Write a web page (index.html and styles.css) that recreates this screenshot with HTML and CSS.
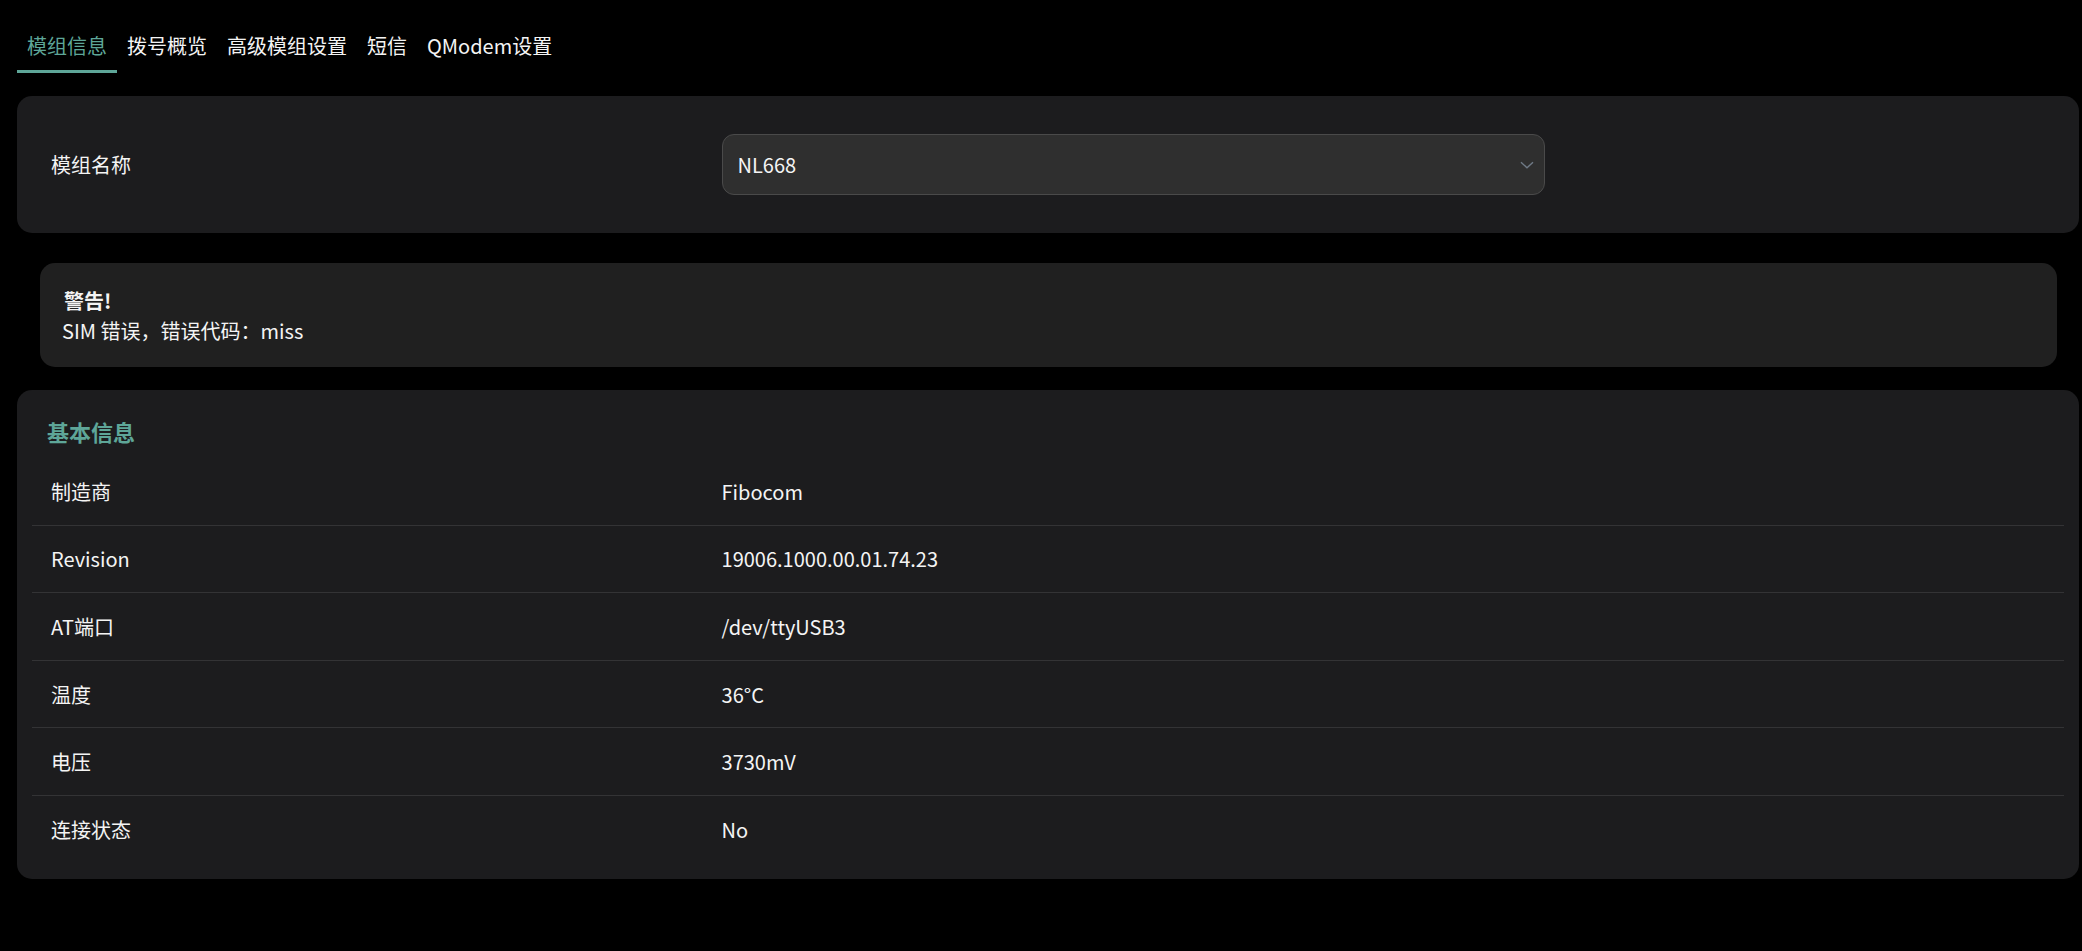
FILE: index.html
```html
<!DOCTYPE html>
<html lang="zh-CN">
<head>
<meta charset="utf-8">
<title>模组信息</title>
<link rel="stylesheet" href="styles.css">
</head>
<body>
<div class="app">
  <nav class="tabs">
    <a class="tab active">模组信息</a>
    <a class="tab">拨号概览</a>
    <a class="tab">高级模组设置</a>
    <a class="tab">短信</a>
    <a class="tab">QModem设置</a>
  </nav>

  <section class="card card-form">
    <div class="field">
      <div class="field-label">模组名称</div>
      <div class="field-value">
        <div class="select">
          <span>NL668</span>
          <svg class="chevron" width="14" height="8" viewBox="0 0 14 8" aria-hidden="true"><path d="M1 1.2 L7 6.8 L13 1.2" fill="none" stroke="#6f7a86" stroke-width="1.4"/></svg>
        </div>
      </div>
    </div>
  </section>

  <div class="alert">
    <strong class="alert-title">警告!</strong>
    <div class="alert-text">SIM 错误，错误代码：miss</div>
  </div>

  <section class="card card-info">
    <h3 class="card-title">基本信息</h3>
    <div class="info">
      <div class="info-row"><div class="info-key">制造商</div><div class="info-val">Fibocom</div></div>
      <div class="info-row"><div class="info-key">Revision</div><div class="info-val">19006.1000.00.01.74.23</div></div>
      <div class="info-row"><div class="info-key">AT端口</div><div class="info-val">/dev/ttyUSB3</div></div>
      <div class="info-row"><div class="info-key">温度</div><div class="info-val">36°C</div></div>
      <div class="info-row"><div class="info-key">电压</div><div class="info-val">3730mV</div></div>
      <div class="info-row"><div class="info-key">连接状态</div><div class="info-val">No</div></div>
    </div>
  </section>
</div>
</body>
</html>
```

FILE: styles.css
```css
html, body {
  margin: 0;
  padding: 0;
  background: #000;
}
body {
  font-family: "Noto Sans CJK SC", "Noto Sans", sans-serif;
  font-size: 20px;
  color: #f4f4f4;
}
.app {
  padding: 0 3px 0 17px;
}
.tabs {
  display: flex;
  padding-top: 32px;
}
.tab {
  display: block;
  padding: 0 10px 10px;
  line-height: 28px;
  border-bottom: 3px solid transparent;
  color: #f4f4f4;
  cursor: pointer;
}
.tab.active {
  color: #5ea698;
  border-bottom-color: #5ea698;
}
.card {
  background: #1c1c1e;
  border-radius: 15px;
  padding: 15px;
}
.card-form {
  margin-top: 23px;
}
.field {
  display: grid;
  grid-template-columns: 33% 1fr;
  align-items: center;
  padding: 23px 0 23px;
}
.field-label {
  padding-left: 19px;
}
.field-value {
  padding-left: 19px;
}
.select {
  box-sizing: border-box;
  width: 823px;
  height: 61px;
  background: #2f2f2f;
  border: 1px solid #4a4a4a;
  border-radius: 12px;
  padding: 0 10px 0 15px;
  display: flex;
  align-items: center;
  justify-content: space-between;
}
.chevron {
  display: block;
}
.alert {
  margin: 30px 22px 0 23px;
  background: #202020;
  border-radius: 15px;
  padding: 23px 22px 21px;
  line-height: 30px;
}
.alert-title {
  display: block;
  font-weight: 700;
  padding-left: 2px;
}
.card-info {
  margin-top: 23px;
}
.card-title {
  margin: 0;
  padding-left: 15px;
  height: 53px;
  line-height: 53px;
  font-size: 22px;
  font-weight: 700;
  color: #5ea698;
}
.info-row {
  box-sizing: border-box;
  display: grid;
  grid-template-columns: 33% 1fr;
  align-items: center;
  height: 67.6px;
  border-bottom: 1px solid #333335;
}
.info-row:last-child {
  border-bottom: none;
}
.info-key, .info-val {
  padding-left: 19px;
}
```
